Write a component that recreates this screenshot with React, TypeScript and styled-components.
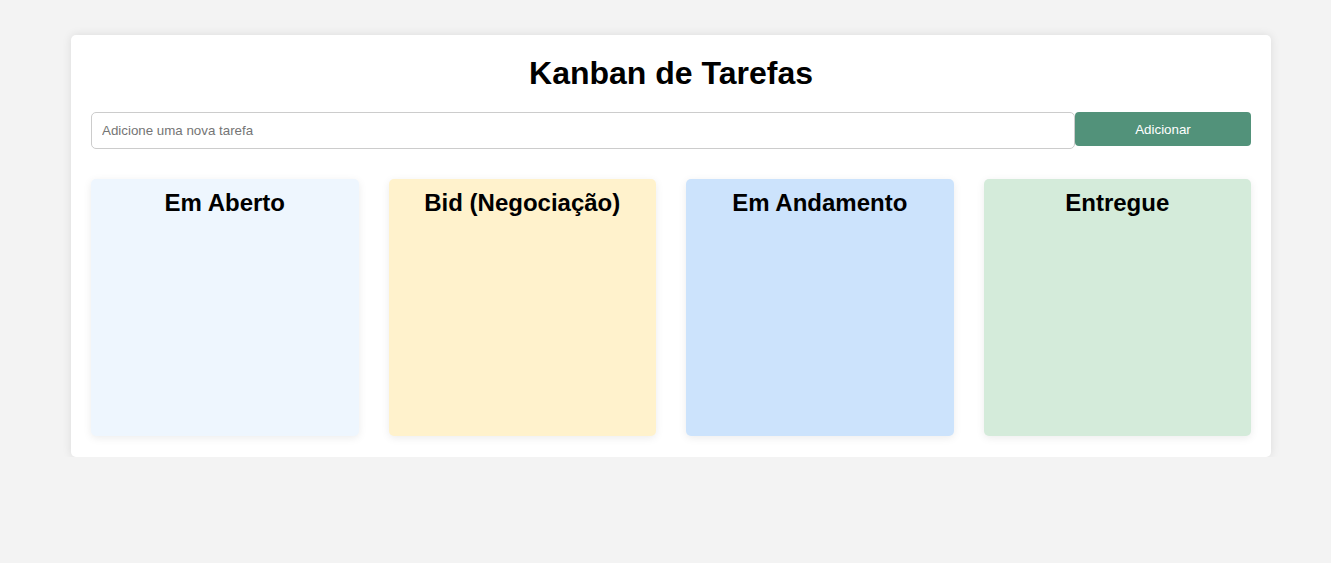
import React from "react";
import styled, { createGlobalStyle } from "styled-components";

const GlobalStyle = createGlobalStyle`
  html, body { margin: 0; padding: 0; }
  body {
    background: #f3f3f3;
    font-family: "Liberation Sans", Arial, sans-serif;
  }
`;

const Page = styled.div`
  padding: 35px 60px 0 71px;
`;

const Container = styled.div`
  width: 1200px;
  box-sizing: border-box;
  background: #ffffff;
  border-radius: 5px;
  box-shadow: 0 0 10px rgba(0, 0, 0, 0.1);
  padding: 20px 20px 21px;
`;

const Title = styled.h1`
  margin: 0 0 20px;
  text-align: center;
  font-size: 32px;
  font-weight: bold;
  color: #000;
`;

const Form = styled.div`
  display: flex;
  align-items: flex-start;
`;

const Input = styled.input`
  flex: 1;
  height: 37px;
  box-sizing: border-box;
  padding: 0 10px;
  border: 1px solid #cccccc;
  border-radius: 5px;
  font-family: "Liberation Sans", Arial, sans-serif;
  font-size: 13.333px;
  outline: none;
  &::placeholder { color: #757575; }
`;

const Button = styled.button`
  width: 176px;
  height: 34px;
  border: none;
  border-radius: 4px;
  background: #52927a;
  color: #ffffff;
  font-family: "Liberation Sans", Arial, sans-serif;
  font-size: 13.333px;
  cursor: pointer;
`;

const Board = styled.div`
  display: flex;
  gap: 30px;
  margin-top: 30px;
`;

const Column = styled.div<{ $bg: string }>`
  flex: 1;
  height: 257px;
  box-sizing: border-box;
  padding: 10px;
  border-radius: 5px;
  background: ${(p) => p.$bg};
  box-shadow: 0 2px 8px rgba(0, 0, 0, 0.08);
`;

const ColumnTitle = styled.h2`
  margin: 0;
  text-align: center;
  font-size: 24px;
  font-weight: bold;
  color: #000;
`;

const columns = [
  { title: "Em Aberto", bg: "#eef6fe" },
  { title: "Bid (Negociação)", bg: "#fff2cc" },
  { title: "Em Andamento", bg: "#cce3fc" },
  { title: "Entregue", bg: "#d4ebda" },
];

export default function App() {
  return (
    <>
      <GlobalStyle />
      <Page>
        <Container>
          <Title>Kanban de Tarefas</Title>
          <Form>
            <Input placeholder="Adicione uma nova tarefa" />
            <Button>Adicionar</Button>
          </Form>
          <Board>
            {columns.map((c) => (
              <Column key={c.title} $bg={c.bg}>
                <ColumnTitle>{c.title}</ColumnTitle>
              </Column>
            ))}
          </Board>
        </Container>
      </Page>
    </>
  );
}
